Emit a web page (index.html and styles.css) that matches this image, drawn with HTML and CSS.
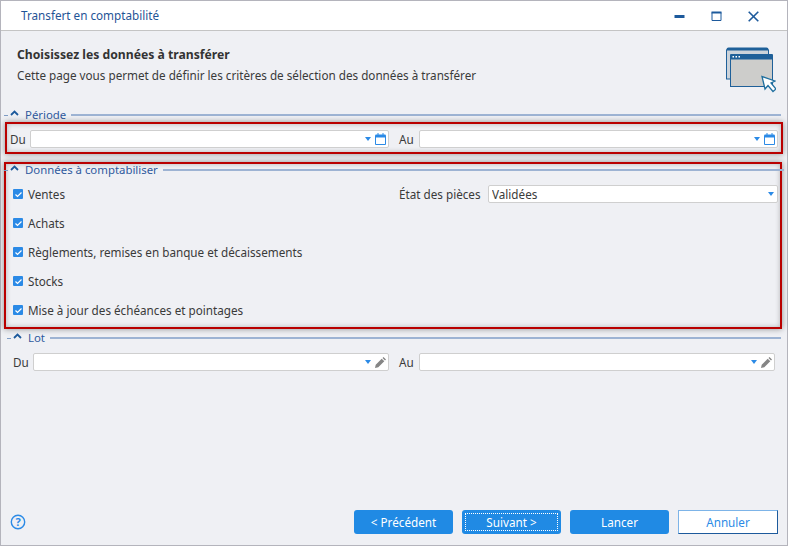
FILE: index.html
```html
<!DOCTYPE html>
<html lang="fr">
<head>
  <meta charset="UTF-8">
  <title>Transfert en comptabilité</title>
  <link rel="stylesheet" href="styles.css">
</head>
<body>
  <div class="window">
    <div class="titlebar">
      <div class="title">Transfert en comptabilité</div>
      <div class="win-buttons">
        <svg width="11" height="12" viewBox="0 0 11 12"><path d="M.5 6.500h10" stroke="#1d5a9c" stroke-width="3"/></svg>
        <svg width="11" height="12" viewBox="0 0 11 12"><path d="M1 2.500h9v8H1z" fill="none" stroke="#1d5a9c" stroke-width="1"/><path d="M.5 2.500h10" stroke="#1d5a9c" stroke-width="2"/></svg>
        <svg width="11" height="12" viewBox="0 0 11 12"><path d="M.7 1.700l9.600 9.600M10.300 1.700l-9.600 9.600" stroke="#1d5a9c" stroke-width="1.600"/></svg>
      </div>
    </div>

    <div class="intro">
      <div>
        <h2>Choisissez les données à transférer</h2>
        <p>Cette page vous permet de définir les critères de sélection des données à transférer</p>
      </div>
      <svg class="intro-icon" width="50" height="46" viewBox="0 0 50 46">
        <path d="M.5 2.500a2 2 0 0 1 2-2h38a2 2 0 0 1 2 2v5h-42z" fill="#1f6099"/>
        <rect x=".5" y="3" width="42" height="29" fill="#ccd3da" stroke="#1f6099"/>
        <rect x="4.500" y="8.500" width="42" height="31" fill="#cdcdcb" stroke="#1f6099"/>
        <rect x="4" y="7" width="43" height="5.500" rx="1" fill="#1f6099"/>
        <path d="M6.500 9.800h1.500M9.500 9.800h1.500M12.500 9.800h1.500" stroke="#fff" stroke-width="1.500"/>
        <path d="M36 29.500l3 12.500 3-3.500 5 6 3-2.500-5-6 4-2z" fill="#fff" stroke="#1f6f9f" stroke-width="1.300"/>
      </svg>
    </div>

    <div class="legend">
      <span class="dash"></span>
      <svg class="chevron" width="9" height="6" viewBox="0 0 9 6"><path d="M1 5l3.500-3.500L8 5" fill="none" stroke="#1d5a9c" stroke-width="1.800"/></svg>
      <span class="legend-text">Période</span>
      <span class="legend-line"></span>
    </div>
    <div class="marked marked-period">
      <div class="two-cols">
        <div class="field-row">
          <label>Du</label>
          <div class="field">
            <input type="text">
            <span class="arrow"></span>
            <svg width="11" height="12" viewBox="0 0 11 12"><path d="M.5 2.500h10v9H.5z" fill="#fff" stroke="#2b8ae6"/><path d="M.5 1.500h10v3H.5z" fill="#2b8ae6"/><path d="M3 0v2M8 0v2" stroke="#2b8ae6"/></svg>
          </div>
        </div>
        <div class="field-row">
          <label>Au</label>
          <div class="field">
            <input type="text">
            <span class="arrow"></span>
            <svg width="11" height="12" viewBox="0 0 11 12"><path d="M.5 2.500h10v9H.5z" fill="#fff" stroke="#2b8ae6"/><path d="M.5 1.500h10v3H.5z" fill="#2b8ae6"/><path d="M3 0v2M8 0v2" stroke="#2b8ae6"/></svg>
          </div>
        </div>
      </div>
    </div>

    <div class="marked marked-data">
      <div class="legend legend-inner">
        <span class="dash"></span>
        <svg class="chevron" width="9" height="6" viewBox="0 0 9 6"><path d="M1 5l3.500-3.500L8 5" fill="none" stroke="#1d5a9c" stroke-width="1.800"/></svg>
        <span class="legend-text">Données à comptabiliser</span>
        <span class="legend-line"></span>
      </div>
      <div class="data-cols">
        <div class="checks">
          <label class="check"><span class="box"><svg width="9" height="9" viewBox="0 0 9 9"><path d="M1.500 4.500l2 2 4-4" fill="none" stroke="#fff" stroke-width="1.200"/></svg></span>Ventes</label>
          <label class="check"><span class="box"><svg width="9" height="9" viewBox="0 0 9 9"><path d="M1.500 4.500l2 2 4-4" fill="none" stroke="#fff" stroke-width="1.200"/></svg></span>Achats</label>
          <label class="check"><span class="box"><svg width="9" height="9" viewBox="0 0 9 9"><path d="M1.500 4.500l2 2 4-4" fill="none" stroke="#fff" stroke-width="1.200"/></svg></span>Règlements, remises en banque et décaissements</label>
          <label class="check"><span class="box"><svg width="9" height="9" viewBox="0 0 9 9"><path d="M1.500 4.500l2 2 4-4" fill="none" stroke="#fff" stroke-width="1.200"/></svg></span>Stocks</label>
          <label class="check"><span class="box"><svg width="9" height="9" viewBox="0 0 9 9"><path d="M1.500 4.500l2 2 4-4" fill="none" stroke="#fff" stroke-width="1.200"/></svg></span>Mise à jour des échéances et pointages</label>
        </div>
        <div class="field-row state-row">
          <label>État des pièces</label>
          <div class="field">
            <input type="text" value="Validées">
            <span class="arrow"></span>
          </div>
        </div>
      </div>
    </div>

    <div class="legend legend-lot">
      <span class="dash"></span>
      <svg class="chevron" width="9" height="6" viewBox="0 0 9 6"><path d="M1 5l3.500-3.500L8 5" fill="none" stroke="#1d5a9c" stroke-width="1.800"/></svg>
      <span class="legend-text">Lot</span>
      <span class="legend-line"></span>
    </div>
    <div class="two-cols lot-row">
      <div class="field-row">
        <label>Du</label>
        <div class="field">
          <input type="text">
          <span class="arrow"></span>
          <svg width="11" height="11" viewBox="0 0 11 11"><path d="M0 11l.7-3.300 6-6 2.600 2.600-6 6zM7.500 1l1-1 2.500 2.500-1 1z" fill="#858585"/></svg>
        </div>
      </div>
      <div class="field-row">
        <label>Au</label>
        <div class="field">
          <input type="text">
          <span class="arrow"></span>
          <svg width="11" height="11" viewBox="0 0 11 11"><path d="M0 11l.7-3.300 6-6 2.600 2.600-6 6zM7.500 1l1-1 2.500 2.500-1 1z" fill="#858585"/></svg>
        </div>
      </div>
    </div>

    <div class="footer">
      <svg class="help" width="16" height="16" viewBox="0 0 16 16">
        <circle cx="8" cy="8" r="6.700" fill="none" stroke="#2b8ae6" stroke-width="1.400"/>
        <text x="8" y="12" text-anchor="middle" class="help-mark">?</text>
      </svg>
      <div class="buttons">
        <button type="button">&lt; Précédent</button>
        <button type="button" class="focused"><span>Suivant &gt;</span></button>
        <button type="button">Lancer</button>
        <button type="button" class="cancel">Annuler</button>
      </div>
    </div>
  </div>
</body>
</html>
```

FILE: styles.css
```css
* { margin: 0; padding: 0; box-sizing: border-box; }
body {
  font-family: "Noto Sans", Tahoma, sans-serif;
  font-size: 11.7px;
  background-color: #eff0f4;
  color: #3a3a3a;
}
.window {
  height: 546px;
  display: flex;
  flex-direction: column;
  background-color: #eff0f4;
  border: 1px solid #b4b4bc;
}
.titlebar {
  height: 30px;
  flex: none;
  display: flex;
  align-items: center;
  justify-content: space-between;
  background-color: #fff;
  border-bottom: 1px solid #c4c4c4;
  padding: 0 28px 0 20px;
}
.title {
  color: #1f5496;
  padding-bottom: 2px;
}
.win-buttons {
  display: flex;
  gap: 26px;
}
.intro {
  height: 77px;
  flex: none;
  display: flex;
  justify-content: space-between;
  padding: 16px 11px 0 16px;
}
.intro h2 {
  font-size: 12.2px;
  line-height: 16px;
  margin-bottom: 4px;
  color: #333;
}
.intro p {
  line-height: 16px;
}
.legend {
  height: 14px;
  flex: none;
  display: flex;
  align-items: center;
  padding: 0 6px 0 3px;
}
.dash {
  width: 4px;
  height: 1px;
  background-color: #7f9cc4;
}
.chevron {
  margin: -4px 6px 0 2px;
}
.legend-text {
  font-size: 11.4px;
  color: #2f5a9e;
  padding-bottom: 1px;
}
.legend-line {
  flex: 1;
  height: 2px;
  margin-left: 5px;
  background-color: #9db3d3;
}
.marked {
  flex: none;
  border: 2px solid #b90000;
  box-shadow: 0 0 6px rgba(0, 0, 0, 0.4), inset 0 0 5px rgba(0, 0, 0, 0.25);
}
.marked-period {
  height: 32px;
  margin: 0 4px;
  padding: 6px 3px 0;
}
.marked-data {
  height: 167px;
  margin: 8px 5px 2px 3px;
  padding: 0 2px 0 7px;
}
.legend-inner {
  margin: -1px -8px 1px -9px;
  padding: 0 2px 0 0;
}
.two-cols {
  display: grid;
  grid-template-columns: 1fr 1fr;
  gap: 10px;
}
.field-row {
  display: flex;
  align-items: center;
  gap: 5px;
}
.field-row label {
  width: 15px;
  flex: none;
}
.field {
  flex: 1;
  min-width: 0;
  height: 18px;
  display: flex;
  align-items: center;
  gap: 3px;
  padding: 0 2px 0 3px;
  background-color: #fff;
  border: 1px solid #cfcfcf;
  border-radius: 2px;
}
.field input {
  flex: 1;
  min-width: 0;
  border: none;
  outline: none;
  background: none;
  font: inherit;
  color: inherit;
}
.arrow {
  width: 0;
  height: 0;
  margin-right: 1px;
  border-left: 3.500px solid transparent;
  border-right: 3.500px solid transparent;
  border-top: 4px solid #2b8ae6;
}
.data-cols {
  display: grid;
  grid-template-columns: 1fr 379px;
  gap: 10px;
  padding-top: 1px;
}
.checks {
  display: flex;
  flex-direction: column;
  gap: 13px;
  padding-top: 7px;
}
.check {
  height: 16px;
  display: flex;
  align-items: center;
  gap: 5px;
}
.box {
  width: 10px;
  height: 10px;
  display: flex;
  align-items: center;
  justify-content: center;
  background-color: #2b8ae6;
  border-radius: 1px;
}
.state-row {
  align-self: start;
  margin-top: 6px;
}
.state-row label {
  width: 84px;
  white-space: nowrap;
}
.legend-lot {
  padding-left: 6px;
}
.lot-row {
  flex: none;
  padding: 8px 12px 0 12px;
}
.footer {
  margin-top: auto;
  display: flex;
  align-items: center;
  justify-content: space-between;
  padding: 0 9px 11px 9px;
}
.help-mark {
  font-size: 11px;
  font-weight: bold;
  fill: #2b8ae6;
}
.buttons {
  display: flex;
  gap: 9px;
}
button {
  width: 99px;
  height: 24px;
  font: inherit;
  color: #fff;
  background-color: #208ae4;
  border: none;
  border-radius: 3px;
}
button.focused {
  padding: 3px;
}
button.focused span {
  height: 100%;
  display: flex;
  align-items: center;
  justify-content: center;
  border: 1px dotted #fff;
}
button.cancel {
  width: 100px;
  color: #2b8ae6;
  background-color: #fff;
  border: 1px solid #1d5a9c;
  border-top-color: #7db4e8;
  border-left-color: #7db4e8;
  border-radius: 0;
}
```
